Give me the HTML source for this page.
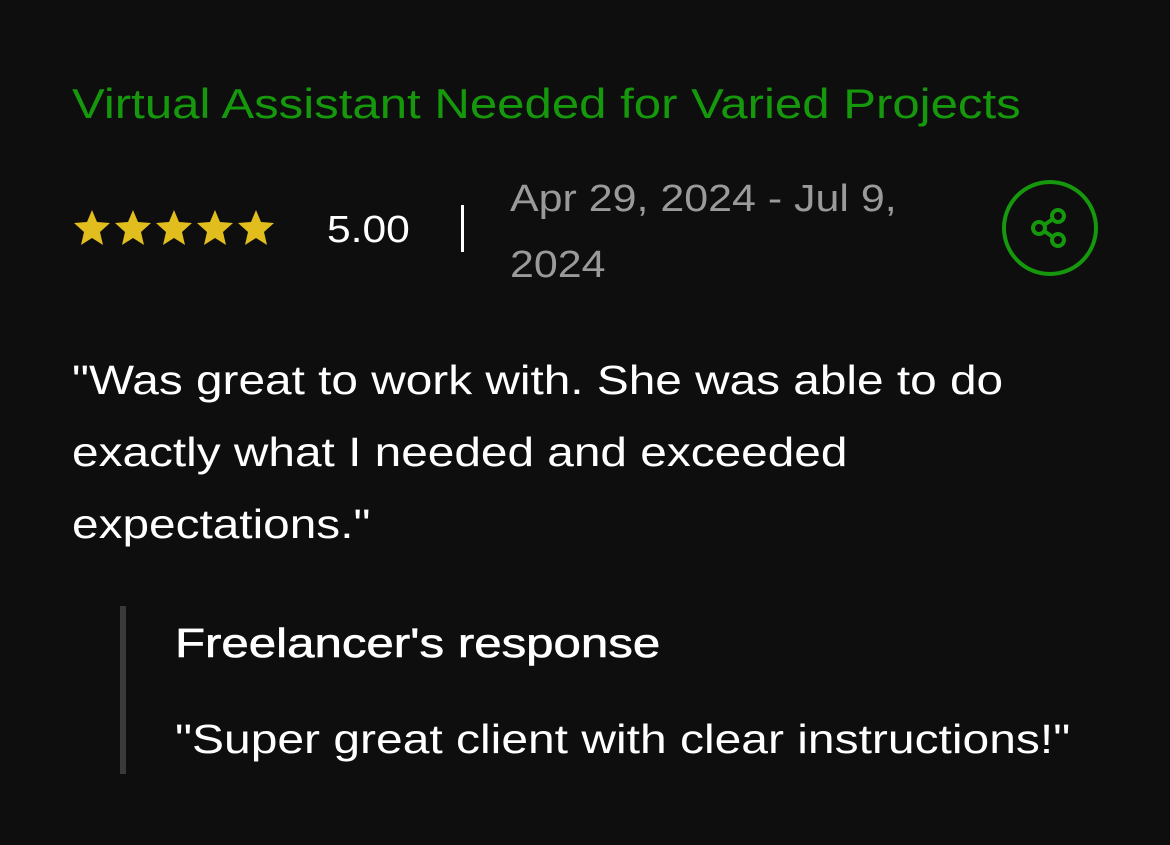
<!DOCTYPE html>
<html><head><style>
body{margin:0;width:1170px;height:845px;background:#0e0e0e;font-family:"Liberation Sans",sans-serif;overflow:hidden;position:relative}
.a{position:absolute;white-space:nowrap;transform-origin:0 0}
</style></head><body>
<div class="a" style="left:72px;top:80px;font-size:42px;color:#16980c;transform:scaleX(1.17)">Virtual Assistant Needed for Varied Projects</div>
<svg class="a" style="left:72px;top:208px" width="206" height="40" viewBox="0 0 206 40">
<defs><polygon id="s" points="20,2 25,14 38,15 28,24 31,37 20,30 9,37 12,24 2,15 15,14" fill="#e1be1e"/></defs>
<use href="#s" x="0"/><use href="#s" x="41"/><use href="#s" x="82"/><use href="#s" x="123"/><use href="#s" x="164"/>
</svg>
<div class="a" style="left:327px;top:209px;font-size:38px;color:#fff;transform:scaleX(1.12)">5.00</div>
<div class="a" style="left:461px;top:205px;width:3px;height:47px;background:#fff"></div>
<div class="a" style="left:510px;top:166px;font-size:38px;line-height:66px;color:#9a9a9a;transform:scaleX(1.13)">Apr 29, 2024 - Jul 9,<br>2024</div>
<svg class="a" style="left:1001px;top:179px" width="98" height="98" viewBox="0 0 98 98">
<circle cx="49" cy="49" r="46" fill="none" stroke="#16980c" stroke-width="4"/>
<g fill="none" stroke="#16980c" stroke-width="4">
<circle cx="57" cy="37" r="6"/><circle cx="57" cy="61" r="6"/><circle cx="38" cy="49" r="6"/>
<line x1="43" y1="46" x2="52" y2="40"/><line x1="43" y1="52" x2="52" y2="58"/></g>
</svg>
<div class="a" style="left:72px;top:344px;font-size:41px;line-height:72px;color:#fff;transform:scaleX(1.165)">"Was great to work with. She was able to do<br>exactly what I needed and exceeded<br>expectations."</div>
<div class="a" style="left:120px;top:606px;width:6px;height:168px;background:#3a3a3a"></div>
<div class="a" style="left:175px;top:620px;font-size:41px;color:#fff;transform:scaleX(1.2);-webkit-text-stroke:0.6px #fff">Freelancer's response</div>
<div class="a" style="left:175px;top:716px;font-size:41px;color:#fff;transform:scaleX(1.17)">"Super great client with clear instructions!"</div>
</body></html>
